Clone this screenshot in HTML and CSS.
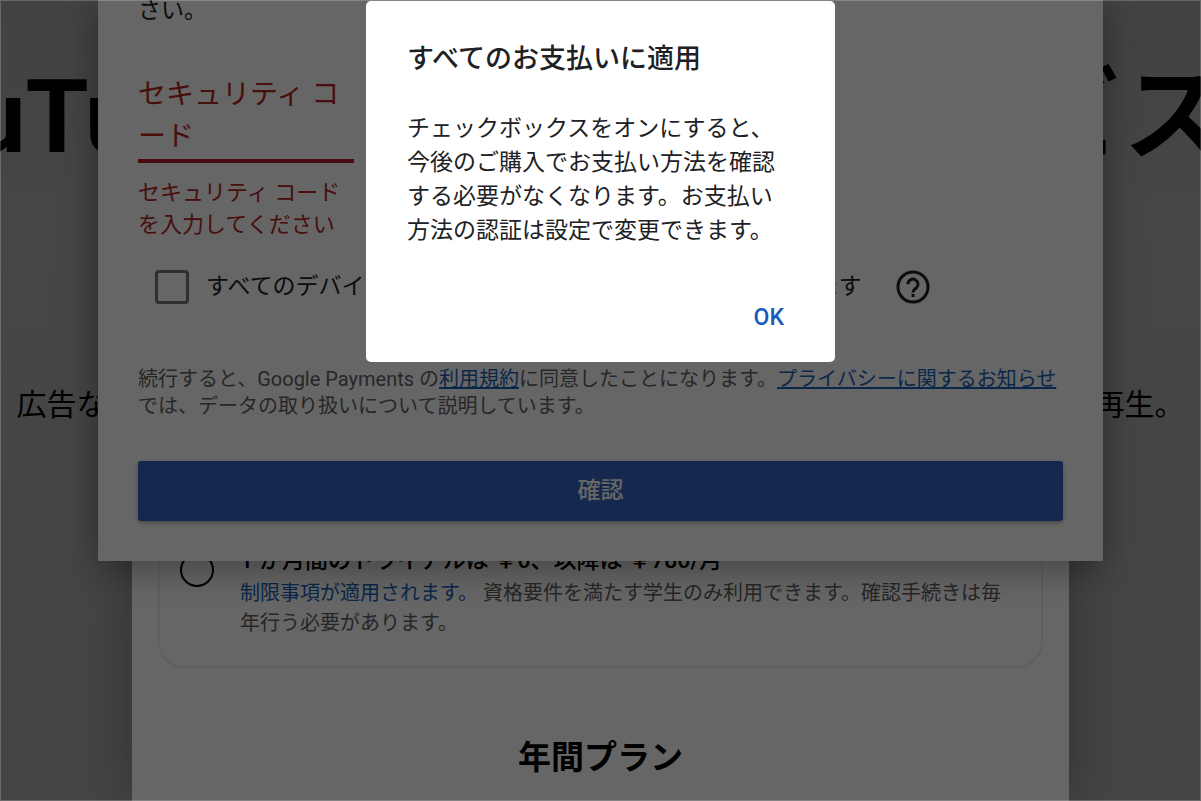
FILE: index.html
```html
<!DOCTYPE html>
<html lang="ja">
<head>
    <meta charset="UTF-8">
    <meta name="viewport" content="width=device-width, initial-scale=1.0">
    <title>YouTube Premium</title>
    <link rel="stylesheet" href="styles.css">
</head>
<body>

    <div class="stage">
        <header class="hero">
            <h1><span>YouTube</span><span>サービス</span></h1>
            <p>広告なしで動画を視聴、オフライン保存、バックグラウンドで音楽や動画を連続再生。</p>
        </header>

        <main class="plans">
            <div class="plan-card">
                <input type="radio" id="plan-student" name="plan">
                <div class="plan-text">
                    <label for="plan-student">1 か月間のトライアルは ￥0、以降は ￥780/月</label>
                    <p><a href="#">制限事項が適用されます。</a> 資格要件を満たす学生のみ利用できます。確認手続きは毎年行う必要があります。</p>
                </div>
            </div>
            <h2>年間プラン</h2>
        </main>

        <!-- Payment form -->
        <form class="payment">
            <p class="notice">さい。</p>
            <div class="field">
                <label for="security-code">セキュリティ コード</label>
                <input type="text" id="security-code" aria-describedby="code-error">
            </div>
            <p class="error" id="code-error">セキュリティ コードを入力してください</p>
            <div class="check-row">
                <input type="checkbox" id="all-devices">
                <label for="all-devices">すべてのデバイスで Google お支払い方法を自動的に確認します</label>
                <button type="button" class="help" aria-label="ヘルプ">
                    <svg viewBox="0 0 34 34" fill="none" stroke="currentColor" stroke-width="3">
                        <circle cx="17" cy="17" r="15"/>
                        <path d="M12 14.2a5 5 0 1 1 8.4 3.6c-2 1.7-3.4 2.3-3.4 4.7"/>
                        <path d="M17 24v3"/>
                    </svg>
                </button>
            </div>
            <p class="legal">続行すると、Google Payments の<a href="#">利用規約</a>に同意したことになります。<a href="#">プライバシーに関するお知らせ</a>では、データの取り扱いについて説明しています。</p>
            <button type="submit" class="confirm">確認</button>
        </form>
    </div>

    <div class="scrim">
        <section class="alert" role="dialog" aria-labelledby="alert-title">
            <h2 id="alert-title">すべてのお支払いに適用</h2>
            <p>チェックボックスをオンにすると、今後のご購入でお支払い方法を確認する必要がなくなります。お支払い方法の認証は設定で変更できます。</p>
            <button type="button">OK</button>
        </section>
    </div>

</body>
</html>
```

FILE: styles.css
```css
/* Reset */
* {
    box-sizing: border-box;
    margin: 0;
    padding: 0;
}

body {
    font-family: Roboto, "Noto Sans CJK JP", sans-serif;
    font-size: 20px;
    color: #202124;
    overflow: hidden;
}

button,
input {
    font: inherit;
}

/* Page and payment form share one cell */
.stage {
    display: grid;
    grid-template-columns: minmax(0, 1fr);
    grid-template-rows: 100vh;
}

.stage > * {
    grid-area: 1 / 1;
}

/* Hero */
.hero {
    padding-top: 57px;
    background: linear-gradient(to bottom, #a4a6ab, #aeaeb2 25%, #acacac);
    color: #030303;
    overflow: hidden;
}

.hero h1 {
    display: flex;
    justify-content: space-between;
    margin: 0 -24px 0 -149px;
    font-size: 102px;
    line-height: 120px;
}

.hero p {
    margin-top: 208px;
    font-size: 30px;
    line-height: 40px;
    text-align: center;
    white-space: nowrap;
}

/* Plans */
.plans {
    width: 78%;
    margin: 0 auto;
    padding: 480px 26px 0;
    background: #fff;
    box-shadow: 0 0 48px rgba(0, 0, 0, 0.3);
    overflow: hidden;
}

.plan-card {
    display: flex;
    gap: 26px;
    padding: 64px 24px 28px 20px;
    border: 2px solid #eceeee;
    border-radius: 26px;
}

.plan-card input {
    appearance: none;
    flex: none;
    width: 34px;
    height: 34px;
    margin-top: 7px;
    border: 2px solid #030303;
    border-radius: 50%;
}

.plan-text label {
    display: block;
    margin-bottom: 2px;
    font-size: 23px;
    font-weight: 500;
    line-height: 30px;
    color: #030303;
}

.plan-text p {
    line-height: 30px;
    color: #606060;
}

.plan-text a {
    color: #1a62b8;
    text-decoration: none;
}

.plans h2 {
    margin-top: 66px;
    font-size: 33px;
    line-height: 48px;
    text-align: center;
    color: #030303;
}

/* Payment form */
.payment {
    align-self: start;
    margin: 0 98px;
    padding: 0 40px 40px;
    background: #fff;
    box-shadow: 0 8px 36px rgba(0, 0, 0, 0.35);
}

.notice {
    font-size: 23px;
    line-height: 22px;
}

.field {
    display: grid;
    width: 216px;
    margin-top: 52px;
}

.field > * {
    grid-area: 1 / 1;
}

.field label {
    padding-bottom: 5px;
    font-size: 28px;
    line-height: 42px;
    color: #b3261e;
}

.field input {
    width: 100%;
    border: 0;
    border-bottom: 4px solid #b31e28;
    background: none;
    outline: none;
}

.error {
    width: 216px;
    margin-top: 14px;
    font-size: 22px;
    line-height: 32px;
    color: #b3261e;
}

.check-row {
    display: flex;
    align-items: center;
    gap: 17px;
    margin: 29px 0 0 17px;
    font-size: 23px;
    line-height: 34px;
}

.check-row input {
    appearance: none;
    width: 34px;
    height: 34px;
    border: 3px solid #757575;
    border-radius: 4px;
}

.help {
    width: 34px;
    height: 34px;
    margin-left: 17px;
    border: 0;
    background: none;
    color: #202124;
}

.help svg {
    display: block;
}

.legal {
    margin-top: 62px;
    line-height: 27px;
    color: #5f6368;
}

.legal a {
    color: #1a62b8;
}

.confirm {
    display: block;
    width: 100%;
    height: 60px;
    margin-top: 41px;
    padding-bottom: 6px;
    border: 0;
    border-radius: 3px;
    background: #3565c2;
    box-shadow: 0 2px 4px rgba(0, 0, 0, 0.3);
    color: #fff;
    font-size: 23px;
    font-weight: 500;
}

/* Alert over everything */
.scrim {
    position: fixed;
    inset: 0;
    display: flex;
    justify-content: center;
    align-items: flex-start;
    border: 1px solid rgba(255, 255, 255, 0.2);
    background: rgba(0, 0, 0, 0.6);
}

.alert {
    display: flex;
    flex-direction: column;
    width: 469px;
    padding: 38px 41px 27px;
    border-radius: 5px;
    background: #fff;
}

.alert h2 {
    font-size: 27px;
    font-weight: 500;
    line-height: 40px;
}

.alert p {
    margin-top: 33px;
    font-size: 23px;
    line-height: 34px;
}

.alert button {
    align-self: flex-end;
    margin-top: 53px;
    padding: 0 10px;
    border: 0;
    background: none;
    color: #185abc;
    font-size: 23px;
    font-weight: 500;
    line-height: 34px;
}
```
